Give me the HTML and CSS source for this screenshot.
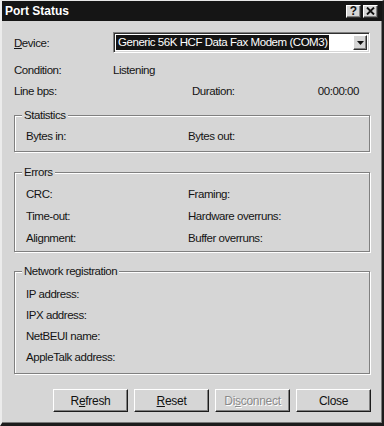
FILE: index.html
```html
<!DOCTYPE html>
<html>
<head>
<meta charset="utf-8">
<link rel="stylesheet" href="styles.css">
</head>
<body>
<div class="window">
  <div class="titlebar">
    <span class="title">Port Status</span>
    <div class="tbtns">
      <span class="tbtn help">?</span>
      <span class="tbtn close"><svg width="9" height="8" viewBox="0 0 9 8"><path d="M1 0.5 L8 7.5 M8 0.5 L1 7.5" stroke="#111" stroke-width="1.9"/></svg></span>
    </div>
  </div>
  <div class="content">
    <div class="row device">
      <span class="dlabel"><u>D</u>evice:</span>
      <div class="combo">
        <span class="sel">Generic 56K HCF Data Fax Modem (COM3)</span>
        <span class="drop"><svg width="7" height="4" viewBox="0 0 7 4"><path d="M0 0 H7 L3.5 4 Z" fill="#111"/></svg></span>
      </div>
    </div>
    <div class="row cond">
      <span>Condition:</span>
      <span>Listening</span>
    </div>
    <div class="row bps">
      <span>Line bps:</span>
      <span class="durlbl">Duration:</span>
      <span class="dur">00:00:00</span>
    </div>
    <fieldset class="group stats">
      <legend>Statistics</legend>
      <div class="grid2">
        <span>Bytes in:</span><span>Bytes out:</span>
      </div>
    </fieldset>
    <fieldset class="group errors">
      <legend>Errors</legend>
      <div class="grid2">
        <span>CRC:</span><span>Framing:</span>
        <span>Time-out:</span><span>Hardware overruns:</span>
        <span>Alignment:</span><span>Buffer overruns:</span>
      </div>
    </fieldset>
    <fieldset class="group net">
      <legend>Network registration</legend>
      <div class="list">
        <span>IP address:</span>
        <span>IPX address:</span>
        <span>NetBEUI name:</span>
        <span>AppleTalk address:</span>
      </div>
    </fieldset>
    <div class="buttons">
      <button class="btn">R<u>e</u>fresh</button>
      <button class="btn"><u>R</u>eset</button>
      <button class="btn disabled">Di<u>s</u>connect</button>
      <button class="btn">Close</button>
    </div>
  </div>
</div>
</body>
</html>
```

FILE: styles.css
```css
html, body {
  margin: 0;
  padding: 0;
  background: #d6d6d6;
}
.window {
  width: 384px;
  height: 426px;
  box-sizing: border-box;
  background: #d6d6d6;
  border-top: 1px solid #e6e6e6;
  border-left: 2px solid #ececec;
  border-right: 2px solid #1c1c1c;
  border-bottom: 3px solid #1c1c1c;
  box-shadow: inset -1px -1px 0 #7a7a7a;
  font-family: "Liberation Sans", Arial, sans-serif;
  font-size: 11.5px;
  letter-spacing: -0.45px;
  color: #141414;
  overflow: hidden;
}
.titlebar {
  height: 20px;
  background: #151515;
  display: flex;
  align-items: center;
  justify-content: space-between;
  padding: 0 4px 0 3px;
}
.title {
  color: #fff;
  font-weight: bold;
  font-size: 12px;
  letter-spacing: 0;
  line-height: 14px;
}
.tbtns {
  display: flex;
  gap: 2px;
}
.tbtn {
  width: 15px;
  height: 13px;
  box-sizing: border-box;
  background: #d6d6d6;
  border: 1px solid;
  border-color: #fff #303030 #303030 #fff;
  box-shadow: inset -1px -1px 0 #808080;
  display: flex;
  align-items: center;
  justify-content: center;
  font-weight: bold;
  font-size: 12px;
  line-height: 11px;
  letter-spacing: 0;
  color: #111;
}
.content {
  padding: 11px 12px 0 12px;
}
.row {
  display: flex;
  align-items: center;
  line-height: 14px;
}
.device {
  height: 21px;
}
.dlabel {
  width: 99px;
}
.combo {
  flex: 1;
  height: 21px;
  box-sizing: border-box;
  background: #fff;
  border: 1px solid;
  border-color: #808080 #fff #fff #808080;
  box-shadow: inset 1px 1px 0 #303030, inset -1px -1px 0 #d6d6d6;
  display: flex;
  align-items: center;
  padding: 2px;
}
.sel {
  background: #141414;
  color: #fff;
  padding: 1px 1px 1px 2px;
  line-height: 13px;
  margin-right: auto;
}
.drop {
  width: 14px;
  height: 15px;
  box-sizing: border-box;
  background: #d6d6d6;
  border: 1px solid;
  border-color: #fff #303030 #303030 #fff;
  box-shadow: inset -1px -1px 0 #808080;
  display: flex;
  align-items: center;
  justify-content: center;
}
.cond {
  margin-top: 10px;
}
.cond span:first-child {
  width: 99px;
}
.bps {
  margin-top: 7px;
}
.bps span:first-child {
  width: 178px;
}
.dur {
  margin-left: auto;
  margin-right: 11px;
}
.group {
  margin: 0;
  min-width: 0;
  border: 1px solid #808080;
  box-shadow: inset 1px 1px 0 #fff, 1px 1px 0 #fff;
  padding: 7px 11px 8px 11px;
  line-height: 14px;
}
.group legend {
  padding: 0 2px;
  margin-left: -4px;
  line-height: 14px;
  background: #d6d6d6;
}
.stats {
  margin-top: 10px;
}
.errors {
  margin-top: 13px;
  padding-top: 8px;
  padding-bottom: 6px;
}
.net {
  margin-top: 12px;
  padding-top: 9px;
  padding-bottom: 9px;
}
.grid2 {
  display: grid;
  grid-template-columns: 162px 1fr;
  row-gap: 8px;
}
.list {
  display: flex;
  flex-direction: column;
  gap: 7px;
}
.buttons {
  margin-top: 15px;
  display: flex;
  justify-content: flex-end;
  gap: 6px;
  margin-right: -1px;
}
.btn {
  width: 75px;
  height: 23px;
  box-sizing: border-box;
  background: #d6d6d6;
  border: 1px solid;
  border-color: #fff #1c1c1c #1c1c1c #fff;
  box-shadow: inset -1px -1px 0 #808080;
  font-family: "Liberation Sans", Arial, sans-serif;
  font-size: 12px;
  letter-spacing: -0.3px;
  color: #111;
  padding: 0;
  margin: 0;
}
.btn.disabled {
  color: #8a8a8a;
  text-shadow: 1px 1px 0 #fff;
}
```
